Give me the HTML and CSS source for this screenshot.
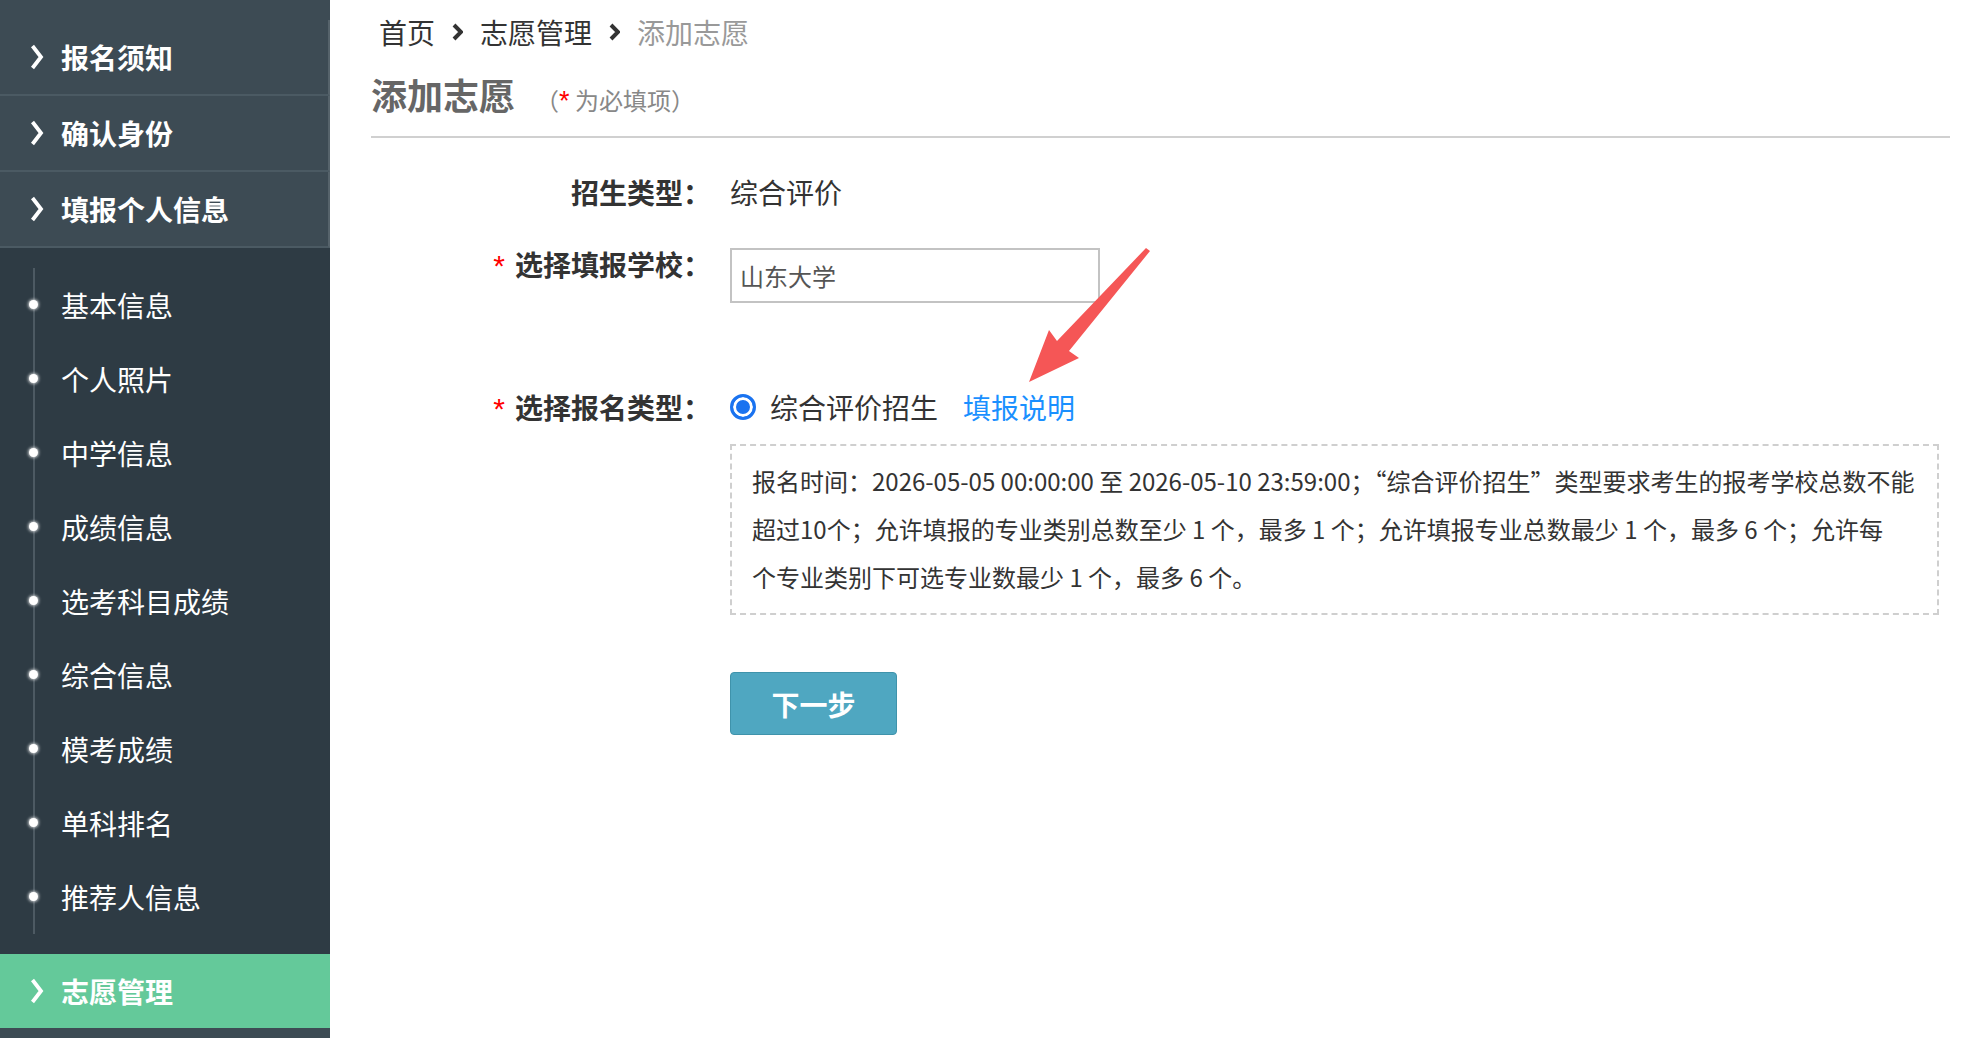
FILE: index.html
```html
<!DOCTYPE html>
<html lang="zh-CN">
<head>
<meta charset="utf-8">
<title>添加志愿</title>
<link rel="stylesheet" href="styles.css">
</head>
<body>
<div class="layout">
  <aside class="sidebar">
    <div class="nav-item"><svg class="nav-chev" viewBox="0 0 14 26"><polyline points="2.5,2 11,13 2.5,24"/></svg><span>报名须知</span></div>
    <div class="nav-item"><svg class="nav-chev" viewBox="0 0 14 26"><polyline points="2.5,2 11,13 2.5,24"/></svg><span>确认身份</span></div>
    <div class="nav-item"><svg class="nav-chev" viewBox="0 0 14 26"><polyline points="2.5,2 11,13 2.5,24"/></svg><span>填报个人信息</span></div>
    <div class="sub-nav">
      <ul class="sub-list">
        <li>基本信息</li>
        <li>个人照片</li>
        <li>中学信息</li>
        <li>成绩信息</li>
        <li>选考科目成绩</li>
        <li>综合信息</li>
        <li>模考成绩</li>
        <li>单科排名</li>
        <li>推荐人信息</li>
      </ul>
    </div>
    <div class="nav-item active"><svg class="nav-chev" viewBox="0 0 14 26"><polyline points="2.5,2 11,13 2.5,24"/></svg><span>志愿管理</span></div>
  </aside>

  <main class="main">
    <nav class="crumbs">
      <span>首页</span>
      <svg class="crumb-chev" viewBox="0 0 11 18"><polyline points="2,2 9,9 2,16"/></svg>
      <span>志愿管理</span>
      <svg class="crumb-chev" viewBox="0 0 11 18"><polyline points="2,2 9,9 2,16"/></svg>
      <span class="current">添加志愿</span>
    </nav>

    <h1 class="title">添加志愿<small>（<em>*</em> 为必填项）</small></h1>

    <form class="form">
      <div class="row row-type">
        <div class="label">招生类型：</div>
        <div class="field">综合评价</div>
      </div>
      <div class="row row-school">
        <div class="label"><em class="req">*</em>选择填报学校：</div>
        <div class="field"><input class="text-input" type="text" value="山东大学"></div>
      </div>
      <div class="row row-kind">
        <div class="label"><em class="req">*</em>选择报名类型：</div>
        <div class="field">
          <label class="radio"><input type="radio" name="kind" checked><span>综合评价招生</span></label>
          <a class="help-link" href="#">填报说明</a>
        </div>
      </div>
      <div class="row row-notice">
        <div class="label"></div>
        <div class="field">
          <div class="notice">报名时间：<span class="lat">2026-05-05 00:00:00</span> 至 <span class="lat">2026-05-10 23:59:00</span>；<span class="lat">“</span>综合评价招生<span class="lat">”</span>类型要求考生的报考学校总数不能超过<span class="lat">10</span>个；允许填报的专业类别总数至少 <span class="lat">1</span> 个，最多 <span class="lat">1</span> 个；允许填报专业总数最少 <span class="lat">1</span> 个，最多 <span class="lat">6</span> 个；允许每<br>个专业类别下可选专业数最少 <span class="lat">1</span> 个，最多 <span class="lat">6</span> 个。</div>
        </div>
      </div>
      <div class="row row-submit">
        <div class="label"></div>
        <div class="field"><button class="btn-next" type="button">下一步</button></div>
      </div>
    </form>
  </main>
</div>

<svg class="annot-arrow" viewBox="0 0 140 150" width="140" height="150">
  <polygon points="126,8 130,11 49,111 59,118 9,142 29,90 37,101"/>
</svg>
</body>
</html>
```

FILE: styles.css
```css
html, body {
  margin: 0;
  padding: 0;
  height: 100%;
  background: #fff;
}

body {
  font-family: "Noto Sans CJK SC", "Liberation Sans", sans-serif;
  color: #333;
  overflow: hidden;
  position: relative;
}

.layout {
  display: flex;
  min-height: 100vh;
}

/* ---------- sidebar ---------- */
.sidebar {
  width: 330px;
  flex-shrink: 0;
  background: #3d4b54;
  padding-top: 20px;
  box-sizing: border-box;
}

.nav-item {
  height: 74px;
  border-bottom: 2px solid #4b5a63;
  border-right: 2px solid #56636b;
  display: flex;
  align-items: center;
  padding-left: 30px;
  color: #fff;
  font-size: 28px;
  font-weight: 700;
}

.nav-chev {
  width: 14px;
  height: 26px;
  margin-right: 17px;
  fill: none;
  stroke: #fff;
  stroke-width: 3.8;
}

.nav-item.active {
  background: #64c99a;
  border-bottom: none;
  border-right: none;
}

.sub-nav {
  background: #2e3b44;
  padding: 20px 0 20px;
}

.sub-list {
  list-style: none;
  margin: 0 0 0 33px;
  padding: 0;
  border-left: 2px solid #4d5a63;
}

.sub-list li {
  position: relative;
  height: 74px;
  line-height: 74px;
  padding-left: 26px;
  color: #fff;
  font-size: 28px;
}

.sub-list li::before {
  content: "";
  position: absolute;
  left: -6px;
  top: 32px;
  width: 9px;
  height: 9px;
  border-radius: 50%;
  background: #fff;
  box-shadow: 0 0 3px 1px rgba(255, 255, 255, 0.7);
}

/* ---------- main ---------- */
.main {
  flex: 1;
  padding: 0 26px 0 41px;
  min-width: 0;
}

.crumbs {
  height: 63px;
  display: flex;
  align-items: center;
  padding-left: 8px;
  font-size: 28px;
  color: #333;
}

.crumb-chev {
  width: 11px;
  height: 18px;
  margin: 0 17px;
  fill: none;
  stroke: #333;
  stroke-width: 4;
}

.crumbs .current {
  color: #999;
}

.title {
  margin: 6px 0 0;
  padding-bottom: 10px;
  line-height: 50px;
  border-bottom: 2px solid #d0d0d0;
  font-size: 36px;
  font-weight: 700;
  color: #666;
}

.title small {
  margin-left: 20px;
  font-size: 24px;
  font-weight: 400;
  color: #888;
}

.title small em {
  font-style: normal;
  font-family: "Liberation Sans", sans-serif;
  font-size: 27px;
  color: #f00;
}

/* ---------- form ---------- */
.form {
  margin-top: 29px;
}

.row {
  display: flex;
  align-items: center;
}

.label {
  width: 340px;
  flex-shrink: 0;
  text-align: right;
  font-size: 28px;
  font-weight: 700;
  color: #333;
}

.req {
  font-style: normal;
  font-family: "Liberation Sans", sans-serif;
  font-size: 30px;
  font-weight: 400;
  color: #f00;
  margin-right: 10px;
}

.field {
  flex: 1;
  margin-left: 19px;
  font-size: 28px;
  color: #333;
}

.row-type {
  height: 50px;
}

.row-school {
  margin-top: 31px;
  align-items: flex-start;
}

.row-school .label {
  line-height: 32px;
}

.text-input {
  width: 370px;
  height: 55px;
  box-sizing: border-box;
  border: 2px solid #c3c3c3;
  padding: 0 8px;
  margin: 0;
  font-family: inherit;
  font-size: 24px;
  color: #555;
  outline: none;
}

.row-kind {
  margin-top: 79px;
  height: 50px;
}

.row-kind .field {
  display: flex;
  align-items: center;
}

.radio {
  display: flex;
  align-items: center;
}

.radio input {
  appearance: none;
  -webkit-appearance: none;
  margin: 0 14px 0 0;
  width: 26px;
  height: 26px;
  box-sizing: border-box;
  border-radius: 50%;
  border: 3px solid #1a73f0;
  background: #1a73f0;
  box-shadow: inset 0 0 0 3px #fff;
}

.help-link {
  margin-left: 25px;
  color: #1a90ff;
  text-decoration: none;
}

.row-notice {
  margin-top: 12px;
}

.notice {
  margin-right: 11px;
  border: 2px dashed #cfcfcf;
  padding: 11px 10px 12px 20px;
  font-size: 24px;
  line-height: 48px;
  color: #333;
}

.notice .lat {
  font-family: "Liberation Sans Narrow", "Noto Sans CJK SC", sans-serif;
}

.row-submit {
  margin-top: 57px;
}

.btn-next {
  width: 167px;
  height: 63px;
  border: 1px solid #3f93ab;
  border-radius: 4px;
  background: #4fa7c1;
  color: #fff;
  font-family: inherit;
  font-size: 28px;
  font-weight: 700;
  padding: 0;
}

/* annotation arrow drawn over the page */
.annot-arrow {
  position: absolute;
  left: 1020px;
  top: 240px;
  fill: #f55656;
}
```
